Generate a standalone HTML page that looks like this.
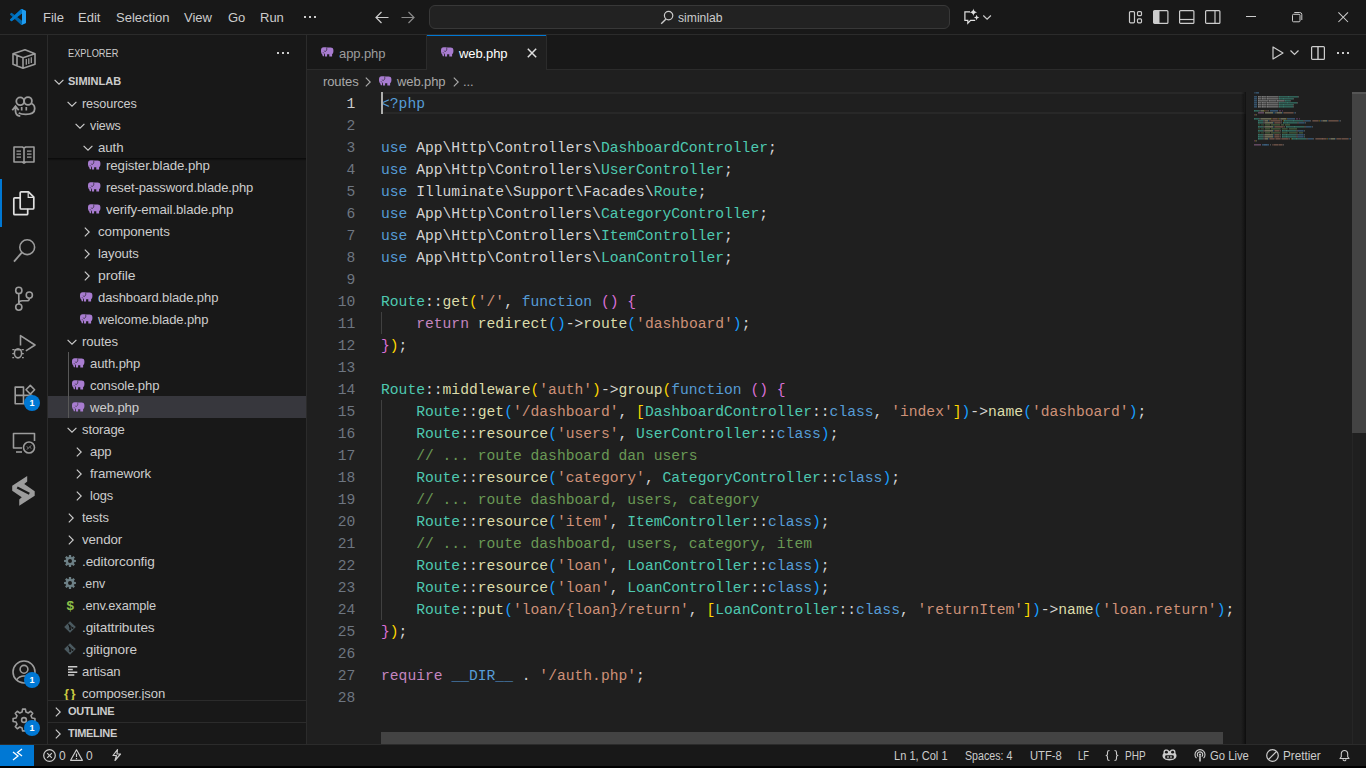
<!DOCTYPE html>
<html><head><meta charset="utf-8"><style>
*{margin:0;padding:0;box-sizing:border-box}
html,body{width:1366px;height:768px;overflow:hidden;background:#000;font-family:"Liberation Sans",sans-serif;font-size:13px;color:#cccccc}
.a{position:absolute}
svg.i{position:absolute;overflow:visible}
.menu{position:absolute;top:9px;color:#cccccc;font-size:13px;line-height:17px;white-space:nowrap}
.row{position:absolute;height:22px;line-height:22px;padding-top:1px;white-space:nowrap;letter-spacing:-0.1px;color:#cccccc;font-size:13px}
.code{position:absolute;left:381px;padding-top:1px;font-family:"Liberation Mono",monospace;font-size:14.66px;line-height:22px;white-space:pre;color:#d4d4d4}
.ln{position:absolute;left:307px;width:48.3px;padding-top:1px;text-align:right;font-family:"Liberation Mono",monospace;font-size:14.66px;line-height:22px;color:#6e7681}
.ln.cur{color:#cccccc}
.k{color:#569cd6}.t{color:#4ec9b0}.f{color:#dcdcaa}.s{color:#ce9178}.c{color:#6a9955}.r{color:#c586c0}
.b1{color:#ffd700}.b2{color:#da70d6}.b3{color:#179fff}
.st{position:absolute;top:746px;transform-origin:0 0;height:21px;line-height:21px;font-size:12px;color:#cccccc;white-space:nowrap}
.badge{position:absolute;width:16px;height:16px;border-radius:8px;background:#0078d4;color:#fff;font-size:9px;font-weight:bold;line-height:16px;text-align:center}
</style></head><body>
<div class="a" style="left:0;top:0;width:1366px;height:34px;background:#181818"></div>
<div class="a" style="left:0;top:34px;width:1366px;height:1px;background:#2b2b2b"></div>
<svg class="i" style="left:10px;top:9px" width="16" height="16" viewBox="0 0 100 100">
<path fill="#0065a9" d="M96.5 10.8 75.9.9a6.2 6.2 0 0 0-7.1 1.2L29.4 38.1 12.2 25.1a4.2 4.2 0 0 0-5.3.2L1.4 30.3a4.2 4.2 0 0 0 0 6.2L16.3 50 1.4 63.6a4.2 4.2 0 0 0 0 6.2l5.5 5a4.2 4.2 0 0 0 5.3.2l17.2-13L68.8 98a6.2 6.2 0 0 0 7.1 1.2l20.6-9.9a6.2 6.2 0 0 0 3.5-5.6V16.4a6.2 6.2 0 0 0-3.5-5.6zM75 72.7 45.1 50 75 27.3z"/>
<path fill="#007acc" d="M96.5 10.8 75.9.9a6.2 6.2 0 0 0-7.1 1.2L1.4 63.6a4.2 4.2 0 0 0 0 6.2l5.5 5a4.2 4.2 0 0 0 5.3.2L93.5 13.4C97 10.7 100 13.2 100 16.4v-.2a6.2 6.2 0 0 0-3.5-5.4z" opacity=".9"/>
<path fill="#1f9cf0" d="M75.9 99.1a6.2 6.2 0 0 1-7.1-1.2c2.3 2.3 6.2.7 6.2-2.6V4.7c0-3.3-3.9-4.9-6.2-2.6a6.2 6.2 0 0 1 7.1-1.2l20.6 9.9a6.2 6.2 0 0 1 3.5 5.6v67.2a6.2 6.2 0 0 1-3.5 5.6z"/>
</svg>
<div class="menu" style="left:43px">File</div>
<div class="menu" style="left:78px">Edit</div>
<div class="menu" style="left:116px">Selection</div>
<div class="menu" style="left:184px">View</div>
<div class="menu" style="left:228px">Go</div>
<div class="menu" style="left:260px">Run</div>
<div class="a" style="left:304px;top:16px;width:2px;height:2px;background:#cccccc"></div>
<div class="a" style="left:309px;top:16px;width:2px;height:2px;background:#cccccc"></div>
<div class="a" style="left:314px;top:16px;width:2px;height:2px;background:#cccccc"></div>
<svg class="i" style="left:375px;top:11px" width="14" height="13" viewBox="0 0 14 13"><path d="M6.5 1 1 6.5 6.5 12M1 6.5h12.5" fill="none" stroke="#cccccc" stroke-width="1.2"/></svg>
<svg class="i" style="left:401px;top:11px" width="14" height="13" viewBox="0 0 14 13"><path d="M7.5 1 13 6.5 7.5 12M13 6.5H.5" fill="none" stroke="#8b8b8b" stroke-width="1.2"/></svg>
<div class="a" style="left:429px;top:5px;width:521px;height:24px;background:#222222;border:1px solid #383838;border-radius:6px"></div>
<svg class="i" style="left:660px;top:10px" width="15" height="15" viewBox="0 0 15 15"><circle cx="8.6" cy="5.6" r="4.2" fill="none" stroke="#cccccc" stroke-width="1.2"/><path d="M5.8 9.2 1.2 13.8" stroke="#cccccc" stroke-width="1.4"/></svg>
<div class="menu" style="left:678px;top:9px;transform:scaleX(0.935);transform-origin:0 0">siminlab</div>
<svg class="i" style="left:960px;top:5px" width="36" height="24" viewBox="0 0 36 24">
<path d="M10 6.9H4.9v8.4h2.9v2.9l2.8-2.9h4.6" fill="none" stroke="#e0e0e0" stroke-width="1.2"/>
<path d="M13.4 3.6Q13.8 6.9 17.1 7.3 13.8 7.7 13.4 11 13 7.7 9.7 7.3 13 6.9 13.4 3.6Z" fill="#e0e0e0"/>
<path d="M16.6 9.8Q16.9 12.2 19.3 12.5 16.9 12.8 16.6 15.2 16.3 12.8 13.9 12.5 16.3 12.2 16.6 9.8Z" fill="#e0e0e0"/>
<path d="M23.3 10.5l3.8 3.6 3.8-3.6" fill="none" stroke="#cccccc" stroke-width="1.2"/>
</svg>
<svg class="i" style="left:1128px;top:10px" width="15" height="14" viewBox="0 0 15 14">
<rect x="1.5" y="1.6" width="5" height="11.2" rx="1" fill="none" stroke="#cccccc" stroke-width="1.2"/>
<rect x="9.5" y="1.6" width="4" height="4" rx="1" fill="none" stroke="#cccccc" stroke-width="1.2"/>
<rect x="9.5" y="8.8" width="4" height="4" rx="1" fill="none" stroke="#cccccc" stroke-width="1.2"/></svg>
<svg class="i" style="left:1153px;top:10px" width="16" height="14" viewBox="0 0 16 14">
<rect x=".6" y=".6" width="14.3" height="12.8" rx="1" fill="none" stroke="#cccccc" stroke-width="1.2"/>
<rect x="1" y="1" width="5.5" height="12" fill="#cccccc"/></svg>
<svg class="i" style="left:1179px;top:10px" width="16" height="14" viewBox="0 0 16 14">
<rect x=".6" y=".6" width="14.3" height="12.8" rx="1" fill="none" stroke="#cccccc" stroke-width="1.2"/>
<path d="M1 9.5h14" stroke="#cccccc" stroke-width="1.2"/></svg>
<svg class="i" style="left:1205px;top:10px" width="16" height="14" viewBox="0 0 16 14">
<rect x=".6" y=".6" width="14.3" height="12.8" rx="1" fill="none" stroke="#cccccc" stroke-width="1.2"/>
<path d="M10 1v12" stroke="#cccccc" stroke-width="1.2"/></svg>
<div class="a" style="left:1246px;top:16px;width:10px;height:1px;background:#cccccc"></div>
<svg class="i" style="left:1292px;top:12px" width="11" height="11" viewBox="0 0 11 11">
<rect x=".5" y="2.3" width="7.5" height="7.5" rx="1" fill="none" stroke="#cccccc"/>
<path d="M2.3 .5h5.5a2 2 0 0 1 2 2v5.5" fill="none" stroke="#cccccc"/></svg>
<svg class="i" style="left:1338px;top:12px" width="11" height="11" viewBox="0 0 11 11"><path d="M.4.4l9.6 9.6M10 .4l-9.6 9.6" stroke="#cccccc" stroke-width="1.05"/></svg>
<div class="a" style="left:0;top:35px;width:47px;height:709px;background:#181818"></div>
<div class="a" style="left:47px;top:35px;width:1px;height:709px;background:#2b2b2b"></div>
<div class="a" style="left:0;top:179px;width:2px;height:48px;background:#0078d4"></div>
<svg class="i" style="left:12px;top:49px" width="24" height="20" viewBox="0 0 24 20">
<path d="M1 4.8 13 .8l10 4v10.4L11 19.2 1 15.2z M1 4.8l10 4 12-4 M11 8.8v10.4 M5 6.4v10.4" fill="none" stroke="#9c9c9c" stroke-width="1.6" stroke-linejoin="round"/>
<path d="M14.3 10v5.8M16.8 9.2V15M19.3 8.3v5.8" stroke="#9c9c9c" stroke-width="1.3"/></svg>
<svg class="i" style="left:8px;top:90px" width="32" height="32" viewBox="0 0 32 32">
<circle cx="12.2" cy="11.3" r="3.9" fill="none" stroke="#9c9c9c" stroke-width="1.8"/>
<circle cx="20" cy="11" r="3.9" fill="none" stroke="#9c9c9c" stroke-width="1.8"/>
<path d="M23.5 13.5c2 .8 3.2 2.8 3.2 5.2 0 3.6-3.5 5.6-9 5.6-3.5 0-5.5-.5-7-1.3" fill="none" stroke="#9c9c9c" stroke-width="1.8"/>
<path d="M13.7 17v3.6M18.3 17v3.6" stroke="#9c9c9c" stroke-width="1.7"/>
<path d="M4.3 20.2 7.5 16.2l3.2 4 M7.5 16.5v4.5c0 2.8 2 4.8 4.8 5.2" fill="none" stroke="#9c9c9c" stroke-width="1.8"/></svg>
<svg class="i" style="left:13px;top:146px" width="22" height="18" viewBox="0 0 22 18">
<path d="M1 1h8.3l1.7 1 1.7-1H21v15h-8.3L11 17.2 9.3 16H1z M11 2v15" fill="none" stroke="#9c9c9c" stroke-width="1.6" stroke-linejoin="round"/>
<path d="M3.5 5.2h4.5M3.5 8.2h4.5M3.5 11.2h4.5M14 5.2h4.5M14 8.2h4.5M14 11.2h4.5" stroke="#9c9c9c" stroke-width="1.3"/></svg>
<svg class="i" style="left:13px;top:191px" width="22" height="25" viewBox="0 0 22 25">
<path d="M7 6.8H1.8a1 1 0 0 0-1 1v14.9a1 1 0 0 0 1 1h11.9a1 1 0 0 0 1-1v-5" fill="none" stroke="#e0e0e0" stroke-width="1.7" stroke-linejoin="round"/>
<path d="M7.2 1.8a1 1 0 0 1 1-1h7.3l5.3 5.3v10.9a1 1 0 0 1-1 1H8.2a1 1 0 0 1-1-1z" fill="none" stroke="#e0e0e0" stroke-width="1.7" stroke-linejoin="round"/>
<path d="M15.2 1.2V6.4h5.2" fill="none" stroke="#e0e0e0" stroke-width="1.2"/></svg>
<svg class="i" style="left:12px;top:238px" width="24" height="24" viewBox="0 0 24 24">
<circle cx="15.2" cy="9.2" r="7.4" fill="none" stroke="#9c9c9c" stroke-width="1.6"/>
<path d="M9.8 14.6 2 23.6" stroke="#9c9c9c" stroke-width="1.8"/></svg>
<svg class="i" style="left:14px;top:286px" width="20" height="24" viewBox="0 0 20 24">
<circle cx="4.8" cy="4.4" r="3.1" fill="none" stroke="#9c9c9c" stroke-width="1.6"/>
<circle cx="4.8" cy="21.1" r="3.1" fill="none" stroke="#9c9c9c" stroke-width="1.6"/>
<circle cx="15.3" cy="9.1" r="3.1" fill="none" stroke="#9c9c9c" stroke-width="1.6"/>
<path d="M4.8 7.5v10.5 M15.3 12.2v.6c0 1.3-.8 2-2.3 2H8.2c-2.2 0-3.4 1.2-3.4 2.8" fill="none" stroke="#9c9c9c" stroke-width="1.6"/></svg>
<svg class="i" style="left:8px;top:330px" width="32" height="32" viewBox="0 0 32 32">
<path d="M12.5 15.4V5.6L27 15 17.9 20.9" fill="none" stroke="#9c9c9c" stroke-width="1.6" stroke-linejoin="round"/>
<ellipse cx="10" cy="23.3" rx="3.6" ry="4.6" fill="none" stroke="#9c9c9c" stroke-width="1.6"/>
<path d="M6.5 19.8h7 M4.3 19.6h1.8M14 19.6h1.8M4.3 23.6h1.8M14 23.6h1.8M4.3 27.6h1.8M14 27.6h1.8" fill="none" stroke="#9c9c9c" stroke-width="1.4"/></svg>
<svg class="i" style="left:13px;top:383px" width="24" height="24" viewBox="0 0 24 24">
<path d="M2.2 4.1H10.5V12.4H2.2Z M2.2 12.4H10.5V20.8H2.2Z M10.5 12.4H18.8V20.8H10.5Z" fill="none" stroke="#9c9c9c" stroke-width="1.6" stroke-linejoin="round"/>
<path d="M17.3 2.4 21.6 6.75 17.3 11.1 13 6.75Z" fill="none" stroke="#9c9c9c" stroke-width="1.6" stroke-linejoin="round"/></svg>
<div class="badge" style="left:24px;top:395px">1</div>
<svg class="i" style="left:12px;top:432px" width="24" height="22" viewBox="0 0 24 22">
<path d="M10 16H1.5V1.5h21V9" fill="none" stroke="#9c9c9c" stroke-width="1.6" stroke-linejoin="round"/>
<path d="M4 20h6" stroke="#9c9c9c" stroke-width="1.6"/>
<circle cx="17" cy="15.5" r="5.5" fill="none" stroke="#9c9c9c" stroke-width="1.6"/>
<path d="M15 14.5l1.5 1.5-1.5 1.5M19 13.5l-1.5 1.5 1.5 1.5" fill="none" stroke="#9c9c9c" stroke-width="1"/></svg>
<svg class="i" style="left:8px;top:474px" width="32" height="32" viewBox="0 0 32 32">
<path d="M19.2 2V7.5L16.25 10 26.7 17.3V21.7L11.25 31.7V25.6L13.75 23.3 4.2 16.7V11.7z" fill="#9c9c9c"/>
<path d="M9.2 13.6 21.3 19.7" stroke="#181818" stroke-width="2.2"/></svg>
<svg class="i" style="left:12px;top:660px" width="24" height="24" viewBox="0 0 24 24">
<circle cx="12" cy="12" r="11" fill="none" stroke="#9c9c9c" stroke-width="1.6"/>
<circle cx="12" cy="9.3" r="3.9" fill="none" stroke="#9c9c9c" stroke-width="1.6"/>
<path d="M4.5 20a9 9 0 0 1 15 0" fill="none" stroke="#9c9c9c" stroke-width="1.6"/></svg>
<div class="badge" style="left:24px;top:672px">1</div>
<svg class="i" style="left:12px;top:708px" width="24" height="24" viewBox="0 0 24 24">
<path d="M19.96 10.05 L22.91 10.57 L22.91 13.43 L19.96 13.95 L19.01 16.25 L20.72 18.70 L18.70 20.72 L16.25 19.01 L13.95 19.96 L13.43 22.91 L10.57 22.91 L10.05 19.96 L7.75 19.01 L5.30 20.72 L3.28 18.70 L4.99 16.25 L4.04 13.95 L1.09 13.43 L1.09 10.57 L4.04 10.05 L4.99 7.75 L3.28 5.30 L5.30 3.28 L7.75 4.99 L10.05 4.04 L10.57 1.09 L13.43 1.09 L13.95 4.04 L16.25 4.99 L18.70 3.28 L20.72 5.30 L19.01 7.75Z" fill="none" stroke="#9c9c9c" stroke-width="1.6" stroke-linejoin="round"/>
<circle cx="12" cy="12" r="2.4" fill="none" stroke="#9c9c9c" stroke-width="1.6"/></svg>
<div class="badge" style="left:24px;top:720px">1</div>
<div class="a" style="left:48px;top:35px;width:258px;height:709px;background:#181818"></div>
<div class="a" style="left:306px;top:35px;width:1px;height:709px;background:#2b2b2b"></div>
<div class="a" style="left:68px;top:46px;font-size:11px;line-height:14px;color:#cccccc;transform:scaleX(0.84);transform-origin:0 0">EXPLORER</div>
<div class="a" style="left:277px;top:52px;width:2px;height:2px;background:#cccccc"></div>
<div class="a" style="left:282px;top:52px;width:2px;height:2px;background:#cccccc"></div>
<div class="a" style="left:287px;top:52px;width:2px;height:2px;background:#cccccc"></div>
<div class="a" style="left:48px;top:396px;width:258px;height:22px;background:#37373d"></div>
<div class="a" style="left:68px;top:352px;width:1px;height:66px;background:#585858"></div>
<svg class="i" style="left:88px;top:160px" width="13" height="10" viewBox="0 0 13 10"><path d="M2.6.3C1 .3 0 1.5 0 3.4v1C0 5.5.7 6.6 1.3 7.5L1.8 9.2H3V7L3.9 7.3V9.4H6.1V7.2H8.3V9.4H11.1V7.3C11.9 6.7 12.4 5.6 12.4 4.2V3.1C12.4 1.4 11.2.6 9.6.6H6.4C5.4.4 4.2.3 2.6.3Z" fill="#a87cd0"/><path d="M5.5.7C6 1.9 5.9 3.5 4.7 4.2 4 4.6 3.4 4.3 3.2 3.8" fill="none" stroke="#181818" stroke-width=".9" opacity=".75"/><path d="M2 5.3 3.3 6.6" stroke="#181818" stroke-width=".9" opacity=".7"/></svg>
<div class="row" style="left:106px;top:154px;transform:scaleX(1.0216);transform-origin:0 0">register.blade.php</div>
<svg class="i" style="left:88px;top:182px" width="13" height="10" viewBox="0 0 13 10"><path d="M2.6.3C1 .3 0 1.5 0 3.4v1C0 5.5.7 6.6 1.3 7.5L1.8 9.2H3V7L3.9 7.3V9.4H6.1V7.2H8.3V9.4H11.1V7.3C11.9 6.7 12.4 5.6 12.4 4.2V3.1C12.4 1.4 11.2.6 9.6.6H6.4C5.4.4 4.2.3 2.6.3Z" fill="#a87cd0"/><path d="M5.5.7C6 1.9 5.9 3.5 4.7 4.2 4 4.6 3.4 4.3 3.2 3.8" fill="none" stroke="#181818" stroke-width=".9" opacity=".75"/><path d="M2 5.3 3.3 6.6" stroke="#181818" stroke-width=".9" opacity=".7"/></svg>
<div class="row" style="left:106px;top:176px">reset-password.blade.php</div>
<svg class="i" style="left:88px;top:204px" width="13" height="10" viewBox="0 0 13 10"><path d="M2.6.3C1 .3 0 1.5 0 3.4v1C0 5.5.7 6.6 1.3 7.5L1.8 9.2H3V7L3.9 7.3V9.4H6.1V7.2H8.3V9.4H11.1V7.3C11.9 6.7 12.4 5.6 12.4 4.2V3.1C12.4 1.4 11.2.6 9.6.6H6.4C5.4.4 4.2.3 2.6.3Z" fill="#a87cd0"/><path d="M5.5.7C6 1.9 5.9 3.5 4.7 4.2 4 4.6 3.4 4.3 3.2 3.8" fill="none" stroke="#181818" stroke-width=".9" opacity=".75"/><path d="M2 5.3 3.3 6.6" stroke="#181818" stroke-width=".9" opacity=".7"/></svg>
<div class="row" style="left:106px;top:198px;transform:scaleX(1.0184);transform-origin:0 0">verify-email.blade.php</div>
<svg class="i" style="left:84px;top:226.5px" width="6" height="10" viewBox="0 0 6 10"><path d="M.8.6 5.2 5 .8 9.4" fill="none" stroke="#cccccc" stroke-width="1.15"/></svg>
<div class="row" style="left:98px;top:220px;transform:scaleX(1.0272);transform-origin:0 0">components</div>
<svg class="i" style="left:84px;top:248.5px" width="6" height="10" viewBox="0 0 6 10"><path d="M.8.6 5.2 5 .8 9.4" fill="none" stroke="#cccccc" stroke-width="1.15"/></svg>
<div class="row" style="left:98px;top:242px;transform:scaleX(1.0073);transform-origin:0 0">layouts</div>
<svg class="i" style="left:84px;top:270.5px" width="6" height="10" viewBox="0 0 6 10"><path d="M.8.6 5.2 5 .8 9.4" fill="none" stroke="#cccccc" stroke-width="1.15"/></svg>
<div class="row" style="left:98px;top:264px;transform:scaleX(1.0744);transform-origin:0 0">profile</div>
<svg class="i" style="left:80px;top:292px" width="13" height="10" viewBox="0 0 13 10"><path d="M2.6.3C1 .3 0 1.5 0 3.4v1C0 5.5.7 6.6 1.3 7.5L1.8 9.2H3V7L3.9 7.3V9.4H6.1V7.2H8.3V9.4H11.1V7.3C11.9 6.7 12.4 5.6 12.4 4.2V3.1C12.4 1.4 11.2.6 9.6.6H6.4C5.4.4 4.2.3 2.6.3Z" fill="#a87cd0"/><path d="M5.5.7C6 1.9 5.9 3.5 4.7 4.2 4 4.6 3.4 4.3 3.2 3.8" fill="none" stroke="#181818" stroke-width=".9" opacity=".75"/><path d="M2 5.3 3.3 6.6" stroke="#181818" stroke-width=".9" opacity=".7"/></svg>
<div class="row" style="left:98px;top:286px">dashboard.blade.php</div>
<svg class="i" style="left:80px;top:314px" width="13" height="10" viewBox="0 0 13 10"><path d="M2.6.3C1 .3 0 1.5 0 3.4v1C0 5.5.7 6.6 1.3 7.5L1.8 9.2H3V7L3.9 7.3V9.4H6.1V7.2H8.3V9.4H11.1V7.3C11.9 6.7 12.4 5.6 12.4 4.2V3.1C12.4 1.4 11.2.6 9.6.6H6.4C5.4.4 4.2.3 2.6.3Z" fill="#a87cd0"/><path d="M5.5.7C6 1.9 5.9 3.5 4.7 4.2 4 4.6 3.4 4.3 3.2 3.8" fill="none" stroke="#181818" stroke-width=".9" opacity=".75"/><path d="M2 5.3 3.3 6.6" stroke="#181818" stroke-width=".9" opacity=".7"/></svg>
<div class="row" style="left:98px;top:308px">welcome.blade.php</div>
<svg class="i" style="left:66.5px;top:338.5px" width="10" height="6" viewBox="0 0 10 6"><path d="M.6.8 5 5.2 9.4.8" fill="none" stroke="#cccccc" stroke-width="1.15"/></svg>
<div class="row" style="left:82px;top:330px;transform:scaleX(1.0115);transform-origin:0 0">routes</div>
<svg class="i" style="left:72px;top:358px" width="13" height="10" viewBox="0 0 13 10"><path d="M2.6.3C1 .3 0 1.5 0 3.4v1C0 5.5.7 6.6 1.3 7.5L1.8 9.2H3V7L3.9 7.3V9.4H6.1V7.2H8.3V9.4H11.1V7.3C11.9 6.7 12.4 5.6 12.4 4.2V3.1C12.4 1.4 11.2.6 9.6.6H6.4C5.4.4 4.2.3 2.6.3Z" fill="#a87cd0"/><path d="M5.5.7C6 1.9 5.9 3.5 4.7 4.2 4 4.6 3.4 4.3 3.2 3.8" fill="none" stroke="#181818" stroke-width=".9" opacity=".75"/><path d="M2 5.3 3.3 6.6" stroke="#181818" stroke-width=".9" opacity=".7"/></svg>
<div class="row" style="left:90px;top:352px;transform:scaleX(1.0080);transform-origin:0 0">auth.php</div>
<svg class="i" style="left:72px;top:380px" width="13" height="10" viewBox="0 0 13 10"><path d="M2.6.3C1 .3 0 1.5 0 3.4v1C0 5.5.7 6.6 1.3 7.5L1.8 9.2H3V7L3.9 7.3V9.4H6.1V7.2H8.3V9.4H11.1V7.3C11.9 6.7 12.4 5.6 12.4 4.2V3.1C12.4 1.4 11.2.6 9.6.6H6.4C5.4.4 4.2.3 2.6.3Z" fill="#a87cd0"/><path d="M5.5.7C6 1.9 5.9 3.5 4.7 4.2 4 4.6 3.4 4.3 3.2 3.8" fill="none" stroke="#181818" stroke-width=".9" opacity=".75"/><path d="M2 5.3 3.3 6.6" stroke="#181818" stroke-width=".9" opacity=".7"/></svg>
<div class="row" style="left:90px;top:374px;transform:scaleX(1.0044);transform-origin:0 0">console.php</div>
<svg class="i" style="left:72px;top:402px" width="13" height="10" viewBox="0 0 13 10"><path d="M2.6.3C1 .3 0 1.5 0 3.4v1C0 5.5.7 6.6 1.3 7.5L1.8 9.2H3V7L3.9 7.3V9.4H6.1V7.2H8.3V9.4H11.1V7.3C11.9 6.7 12.4 5.6 12.4 4.2V3.1C12.4 1.4 11.2.6 9.6.6H6.4C5.4.4 4.2.3 2.6.3Z" fill="#a87cd0"/><path d="M5.5.7C6 1.9 5.9 3.5 4.7 4.2 4 4.6 3.4 4.3 3.2 3.8" fill="none" stroke="#37373d" stroke-width=".9" opacity=".75"/><path d="M2 5.3 3.3 6.6" stroke="#37373d" stroke-width=".9" opacity=".7"/></svg>
<div class="row" style="left:90px;top:396px;transform:scaleX(1.0127);transform-origin:0 0">web.php</div>
<svg class="i" style="left:66.5px;top:426.5px" width="10" height="6" viewBox="0 0 10 6"><path d="M.6.8 5 5.2 9.4.8" fill="none" stroke="#cccccc" stroke-width="1.15"/></svg>
<div class="row" style="left:82px;top:418px;transform:scaleX(1.0025);transform-origin:0 0">storage</div>
<svg class="i" style="left:76px;top:446.5px" width="6" height="10" viewBox="0 0 6 10"><path d="M.8.6 5.2 5 .8 9.4" fill="none" stroke="#cccccc" stroke-width="1.15"/></svg>
<div class="row" style="left:90px;top:440px;transform:scaleX(1.0053);transform-origin:0 0">app</div>
<svg class="i" style="left:76px;top:468.5px" width="6" height="10" viewBox="0 0 6 10"><path d="M.8.6 5.2 5 .8 9.4" fill="none" stroke="#cccccc" stroke-width="1.15"/></svg>
<div class="row" style="left:90px;top:462px;transform:scaleX(1.0217);transform-origin:0 0">framework</div>
<svg class="i" style="left:76px;top:490.5px" width="6" height="10" viewBox="0 0 6 10"><path d="M.8.6 5.2 5 .8 9.4" fill="none" stroke="#cccccc" stroke-width="1.15"/></svg>
<div class="row" style="left:90px;top:484px;transform:scaleX(0.9876);transform-origin:0 0">logs</div>
<svg class="i" style="left:68px;top:512.5px" width="6" height="10" viewBox="0 0 6 10"><path d="M.8.6 5.2 5 .8 9.4" fill="none" stroke="#cccccc" stroke-width="1.15"/></svg>
<div class="row" style="left:82px;top:506px;transform:scaleX(0.9930);transform-origin:0 0">tests</div>
<svg class="i" style="left:68px;top:534.5px" width="6" height="10" viewBox="0 0 6 10"><path d="M.8.6 5.2 5 .8 9.4" fill="none" stroke="#cccccc" stroke-width="1.15"/></svg>
<div class="row" style="left:82px;top:528px;transform:scaleX(1.0250);transform-origin:0 0">vendor</div>
<svg class="i" style="left:64px;top:555px" width="12" height="12" viewBox="0 0 12 12"><path d="M10.11 4.73 L11.90 4.93 L11.90 7.07 L10.11 7.27 L9.80 8.01 L10.93 9.41 L9.41 10.93 L8.01 9.80 L7.27 10.11 L7.07 11.90 L4.93 11.90 L4.73 10.11 L3.99 9.80 L2.59 10.93 L1.07 9.41 L2.20 8.01 L1.89 7.27 L0.10 7.07 L0.10 4.93 L1.89 4.73 L2.20 3.99 L1.07 2.59 L2.59 1.07 L3.99 2.20 L4.73 1.89 L4.93 0.10 L7.07 0.10 L7.27 1.89 L8.01 2.20 L9.41 1.07 L10.93 2.59 L9.80 3.99Z M8 6a2 2 0 1 0-4 0 2 2 0 1 0 4 0Z" fill="#6d8086" fill-rule="evenodd"/></svg>
<div class="row" style="left:82px;top:550px;transform:scaleX(1.0450);transform-origin:0 0">.editorconfig</div>
<svg class="i" style="left:64px;top:577px" width="12" height="12" viewBox="0 0 12 12"><path d="M10.11 4.73 L11.90 4.93 L11.90 7.07 L10.11 7.27 L9.80 8.01 L10.93 9.41 L9.41 10.93 L8.01 9.80 L7.27 10.11 L7.07 11.90 L4.93 11.90 L4.73 10.11 L3.99 9.80 L2.59 10.93 L1.07 9.41 L2.20 8.01 L1.89 7.27 L0.10 7.07 L0.10 4.93 L1.89 4.73 L2.20 3.99 L1.07 2.59 L2.59 1.07 L3.99 2.20 L4.73 1.89 L4.93 0.10 L7.07 0.10 L7.27 1.89 L8.01 2.20 L9.41 1.07 L10.93 2.59 L9.80 3.99Z M8 6a2 2 0 1 0-4 0 2 2 0 1 0 4 0Z" fill="#6d8086" fill-rule="evenodd"/></svg>
<div class="row" style="left:82px;top:572px;transform:scaleX(0.9536);transform-origin:0 0">.env</div>
<div class="a" style="left:66.5px;top:595px;line-height:22px;font-size:13.5px;font-weight:bold;color:#8dc149">$</div>
<div class="row" style="left:82px;top:594px;transform:scaleX(0.9852);transform-origin:0 0">.env.example</div>
<svg class="i" style="left:64px;top:621px" width="12" height="12" viewBox="0 0 12 12"><path d="M6 .2 11.8 6 6 11.8 .2 6z" fill="#4b5a60"/><path d="M4 2.5 6.2 4.7v3.6M6.2 4.7 8.5 7" stroke="#181818" stroke-width="1"/><circle cx="6.2" cy="8.3" r="1" fill="#181818"/><circle cx="8.5" cy="7" r="1" fill="#181818"/></svg>
<div class="row" style="left:82px;top:616px;transform:scaleX(1.0450);transform-origin:0 0">.gitattributes</div>
<svg class="i" style="left:64px;top:643px" width="12" height="12" viewBox="0 0 12 12"><path d="M6 .2 11.8 6 6 11.8 .2 6z" fill="#4b5a60"/><path d="M4 2.5 6.2 4.7v3.6M6.2 4.7 8.5 7" stroke="#181818" stroke-width="1"/><circle cx="6.2" cy="8.3" r="1" fill="#181818"/><circle cx="8.5" cy="7" r="1" fill="#181818"/></svg>
<div class="row" style="left:82px;top:638px;transform:scaleX(1.0463);transform-origin:0 0">.gitignore</div>
<svg class="i" style="left:67.7px;top:665px" width="11" height="11" viewBox="0 0 11 11"><path d="M0 1.8h9.3M0 4.5h4.8M0 7.2h9.3M0 9.9h6.3" stroke="#cccccc" stroke-width="1.5"/></svg>
<div class="row" style="left:82px;top:660px;transform:scaleX(1.0055);transform-origin:0 0">artisan</div>
<div class="a" style="left:64px;top:683px;line-height:22px;font-size:13px;color:#cbcb41;font-weight:bold;letter-spacing:1.5px">{}</div>
<div class="row" style="left:82px;top:682px;transform:scaleX(1.0072);transform-origin:0 0">composer.json</div>
<div class="a" style="left:48px;top:70px;width:258px;height:88px;background:#181818"></div>
<div class="a" style="left:48px;top:158px;width:258px;height:3px;background:linear-gradient(rgba(0,0,0,.6),rgba(0,0,0,0))"></div>
<svg class="i" style="left:53.5px;top:78.5px" width="10" height="6" viewBox="0 0 10 6"><path d="M.6.8 5 5.2 9.4.8" fill="none" stroke="#cccccc" stroke-width="1.15"/></svg>
<div class="row" style="left:68px;top:69px;font-size:11px;font-weight:bold;letter-spacing:0px">SIMINLAB</div>
<svg class="i" style="left:66.5px;top:100.5px" width="10" height="6" viewBox="0 0 10 6"><path d="M.6.8 5 5.2 9.4.8" fill="none" stroke="#cccccc" stroke-width="1.15"/></svg>
<div class="row" style="left:82px;top:92px;transform:scaleX(0.9733);transform-origin:0 0">resources</div>
<svg class="i" style="left:74.5px;top:122.5px" width="10" height="6" viewBox="0 0 10 6"><path d="M.6.8 5 5.2 9.4.8" fill="none" stroke="#cccccc" stroke-width="1.15"/></svg>
<div class="row" style="left:90px;top:114px;transform:scaleX(0.9594);transform-origin:0 0">views</div>
<svg class="i" style="left:82.5px;top:144.5px" width="10" height="6" viewBox="0 0 10 6"><path d="M.6.8 5 5.2 9.4.8" fill="none" stroke="#cccccc" stroke-width="1.15"/></svg>
<div class="row" style="left:98px;top:136px;transform:scaleX(1.0204);transform-origin:0 0">auth</div>
<div class="a" style="left:48px;top:700px;width:258px;height:44px;background:#181818"></div>
<div class="a" style="left:48px;top:700px;width:258px;height:1px;background:#2b2b2b"></div>
<div class="a" style="left:48px;top:722px;width:258px;height:1px;background:#2b2b2b"></div>
<svg class="i" style="left:55px;top:706.5px" width="6" height="10" viewBox="0 0 6 10"><path d="M.8.6 5.2 5 .8 9.4" fill="none" stroke="#cccccc" stroke-width="1.15"/></svg>
<div class="row" style="left:68px;top:699px;font-size:11px;font-weight:bold;letter-spacing:-0.3px">OUTLINE</div>
<svg class="i" style="left:55px;top:728.5px" width="6" height="10" viewBox="0 0 6 10"><path d="M.8.6 5.2 5 .8 9.4" fill="none" stroke="#cccccc" stroke-width="1.15"/></svg>
<div class="row" style="left:68px;top:721px;font-size:11px;font-weight:bold;letter-spacing:-0.3px">TIMELINE</div>
<div class="a" style="left:307px;top:35px;width:1059px;height:35px;background:#181818"></div>
<div class="a" style="left:307px;top:69px;width:1059px;height:1px;background:#2b2b2b"></div>
<div class="a" style="left:426px;top:35px;width:1px;height:35px;background:#2b2b2b"></div>
<div class="a" style="left:427px;top:35px;width:119px;height:35px;background:#1f1f1f"></div>
<div class="a" style="left:427px;top:35px;width:119px;height:1px;background:#0078d4"></div>
<div class="a" style="left:546px;top:35px;width:1px;height:35px;background:#2b2b2b"></div>
<svg class="i" style="left:321px;top:47px" width="13" height="10" viewBox="0 0 13 10"><path d="M2.6.3C1 .3 0 1.5 0 3.4v1C0 5.5.7 6.6 1.3 7.5L1.8 9.2H3V7L3.9 7.3V9.4H6.1V7.2H8.3V9.4H11.1V7.3C11.9 6.7 12.4 5.6 12.4 4.2V3.1C12.4 1.4 11.2.6 9.6.6H6.4C5.4.4 4.2.3 2.6.3Z" fill="#a87cd0"/><path d="M5.5.7C6 1.9 5.9 3.5 4.7 4.2 4 4.6 3.4 4.3 3.2 3.8" fill="none" stroke="#181818" stroke-width=".9" opacity=".75"/><path d="M2 5.3 3.3 6.6" stroke="#181818" stroke-width=".9" opacity=".7"/></svg>
<div class="row" style="left:339px;top:42px;color:#9d9d9d">app.php</div>
<svg class="i" style="left:441px;top:47px" width="13" height="10" viewBox="0 0 13 10"><path d="M2.6.3C1 .3 0 1.5 0 3.4v1C0 5.5.7 6.6 1.3 7.5L1.8 9.2H3V7L3.9 7.3V9.4H6.1V7.2H8.3V9.4H11.1V7.3C11.9 6.7 12.4 5.6 12.4 4.2V3.1C12.4 1.4 11.2.6 9.6.6H6.4C5.4.4 4.2.3 2.6.3Z" fill="#a87cd0"/><path d="M5.5.7C6 1.9 5.9 3.5 4.7 4.2 4 4.6 3.4 4.3 3.2 3.8" fill="none" stroke="#1f1f1f" stroke-width=".9" opacity=".75"/><path d="M2 5.3 3.3 6.6" stroke="#1f1f1f" stroke-width=".9" opacity=".7"/></svg>
<div class="row" style="left:459px;top:42px;color:#ffffff">web.php</div>
<svg class="i" style="left:527px;top:48px" width="10" height="10" viewBox="0 0 10 10"><path d="M.8.8l8.4 8.4M9.2.8l-8.4 8.4" stroke="#e0e0e0" stroke-width="1.5"/></svg>
<svg class="i" style="left:1272px;top:46px" width="12" height="14" viewBox="0 0 12 14"><path d="M1 1v12l10-6z" fill="none" stroke="#cccccc" stroke-width="1.2" stroke-linejoin="round"/></svg>
<svg class="i" style="left:1290px;top:50px" width="9" height="6" viewBox="0 0 9 6"><path d="M.5.5 4.5 4.5 8.5.5" fill="none" stroke="#cccccc" stroke-width="1.2"/></svg>
<svg class="i" style="left:1311px;top:46px" width="14" height="14" viewBox="0 0 14 14"><rect x=".6" y=".6" width="12.8" height="12.8" rx="1" fill="none" stroke="#cccccc" stroke-width="1.2"/><path d="M7 1v12" stroke="#cccccc" stroke-width="1.4"/></svg>
<div class="a" style="left:1337px;top:52px;width:2px;height:2px;background:#cccccc"></div>
<div class="a" style="left:1342px;top:52px;width:2px;height:2px;background:#cccccc"></div>
<div class="a" style="left:1347px;top:52px;width:2px;height:2px;background:#cccccc"></div>
<div class="a" style="left:307px;top:70px;width:1059px;height:22px;background:#1f1f1f"></div>
<div class="row" style="left:323px;top:70px;color:#a9a9a9">routes</div>
<svg class="i" style="left:365px;top:76.5px" width="6" height="10" viewBox="0 0 6 10"><path d="M.8.6 5.2 5 .8 9.4" fill="none" stroke="#a9a9a9" stroke-width="1.15"/></svg>
<svg class="i" style="left:379px;top:76px" width="13" height="10" viewBox="0 0 13 10"><path d="M2.6.3C1 .3 0 1.5 0 3.4v1C0 5.5.7 6.6 1.3 7.5L1.8 9.2H3V7L3.9 7.3V9.4H6.1V7.2H8.3V9.4H11.1V7.3C11.9 6.7 12.4 5.6 12.4 4.2V3.1C12.4 1.4 11.2.6 9.6.6H6.4C5.4.4 4.2.3 2.6.3Z" fill="#a87cd0"/><path d="M5.5.7C6 1.9 5.9 3.5 4.7 4.2 4 4.6 3.4 4.3 3.2 3.8" fill="none" stroke="#1f1f1f" stroke-width=".9" opacity=".75"/><path d="M2 5.3 3.3 6.6" stroke="#1f1f1f" stroke-width=".9" opacity=".7"/></svg>
<div class="row" style="left:397px;top:70px;color:#a9a9a9">web.php</div>
<svg class="i" style="left:453px;top:76.5px" width="6" height="10" viewBox="0 0 6 10"><path d="M.8.6 5.2 5 .8 9.4" fill="none" stroke="#a9a9a9" stroke-width="1.15"/></svg>
<div class="row" style="left:463px;top:70px;color:#a9a9a9">...</div>
<div class="a" style="left:307px;top:92px;width:1059px;height:652px;background:#1f1f1f"></div>
<div class="a" style="left:381px;top:92px;width:865px;height:22px;border:2px solid #282828"></div>
<div class="a" style="left:381px;top:312px;width:1px;height:22px;background:#404040"></div>
<div class="a" style="left:381px;top:400px;width:1px;height:220px;background:#404040"></div>
<div class="ln cur" style="top:92px">1</div>
<div class="code" style="top:92px"><span class="k">&lt;?php</span></div>
<div class="ln" style="top:114px">2</div>
<div class="ln" style="top:136px">3</div>
<div class="code" style="top:136px"><span class="k">use</span> App\Http\Controllers\<span class="t">DashboardController</span>;</div>
<div class="ln" style="top:158px">4</div>
<div class="code" style="top:158px"><span class="k">use</span> App\Http\Controllers\<span class="t">UserController</span>;</div>
<div class="ln" style="top:180px">5</div>
<div class="code" style="top:180px"><span class="k">use</span> Illuminate\Support\Facades\<span class="t">Route</span>;</div>
<div class="ln" style="top:202px">6</div>
<div class="code" style="top:202px"><span class="k">use</span> App\Http\Controllers\<span class="t">CategoryController</span>;</div>
<div class="ln" style="top:224px">7</div>
<div class="code" style="top:224px"><span class="k">use</span> App\Http\Controllers\<span class="t">ItemController</span>;</div>
<div class="ln" style="top:246px">8</div>
<div class="code" style="top:246px"><span class="k">use</span> App\Http\Controllers\<span class="t">LoanController</span>;</div>
<div class="ln" style="top:268px">9</div>
<div class="ln" style="top:290px">10</div>
<div class="code" style="top:290px"><span class="t">Route</span>::<span class="f">get</span><span class="b1">(</span><span class="s">'/'</span>, <span class="k">function</span> <span class="b2">()</span> <span class="b2">{</span></div>
<div class="ln" style="top:312px">11</div>
<div class="code" style="top:312px">    <span class="r">return</span> <span class="f">redirect</span><span class="b3">()</span>-&gt;<span class="f">route</span><span class="b3">(</span><span class="s">'dashboard'</span><span class="b3">)</span>;</div>
<div class="ln" style="top:334px">12</div>
<div class="code" style="top:334px"><span class="b2">}</span><span class="b1">)</span>;</div>
<div class="ln" style="top:356px">13</div>
<div class="ln" style="top:378px">14</div>
<div class="code" style="top:378px"><span class="t">Route</span>::<span class="f">middleware</span><span class="b1">(</span><span class="s">'auth'</span><span class="b1">)</span>-&gt;<span class="f">group</span><span class="b1">(</span><span class="k">function</span> <span class="b2">()</span> <span class="b2">{</span></div>
<div class="ln" style="top:400px">15</div>
<div class="code" style="top:400px">    <span class="t">Route</span>::<span class="f">get</span><span class="b3">(</span><span class="s">'/dashboard'</span>, <span class="b1">[</span><span class="t">DashboardController</span>::<span class="k">class</span>, <span class="s">'index'</span><span class="b1">]</span><span class="b3">)</span>-&gt;<span class="f">name</span><span class="b3">(</span><span class="s">'dashboard'</span><span class="b3">)</span>;</div>
<div class="ln" style="top:422px">16</div>
<div class="code" style="top:422px">    <span class="t">Route</span>::<span class="f">resource</span><span class="b3">(</span><span class="s">'users'</span>, <span class="t">UserController</span>::<span class="k">class</span><span class="b3">)</span>;</div>
<div class="ln" style="top:444px">17</div>
<div class="code" style="top:444px">    <span class="c">// ... route dashboard dan users</span></div>
<div class="ln" style="top:466px">18</div>
<div class="code" style="top:466px">    <span class="t">Route</span>::<span class="f">resource</span><span class="b3">(</span><span class="s">'category'</span>, <span class="t">CategoryController</span>::<span class="k">class</span><span class="b3">)</span>;</div>
<div class="ln" style="top:488px">19</div>
<div class="code" style="top:488px">    <span class="c">// ... route dashboard, users, category</span></div>
<div class="ln" style="top:510px">20</div>
<div class="code" style="top:510px">    <span class="t">Route</span>::<span class="f">resource</span><span class="b3">(</span><span class="s">'item'</span>, <span class="t">ItemController</span>::<span class="k">class</span><span class="b3">)</span>;</div>
<div class="ln" style="top:532px">21</div>
<div class="code" style="top:532px">    <span class="c">// ... route dashboard, users, category, item</span></div>
<div class="ln" style="top:554px">22</div>
<div class="code" style="top:554px">    <span class="t">Route</span>::<span class="f">resource</span><span class="b3">(</span><span class="s">'loan'</span>, <span class="t">LoanController</span>::<span class="k">class</span><span class="b3">)</span>;</div>
<div class="ln" style="top:576px">23</div>
<div class="code" style="top:576px">    <span class="t">Route</span>::<span class="f">resource</span><span class="b3">(</span><span class="s">'loan'</span>, <span class="t">LoanController</span>::<span class="k">class</span><span class="b3">)</span>;</div>
<div class="ln" style="top:598px">24</div>
<div class="code" style="top:598px">    <span class="t">Route</span>::<span class="f">put</span><span class="b3">(</span><span class="s">'loan/{loan}/return'</span>, <span class="b1">[</span><span class="t">LoanController</span>::<span class="k">class</span>, <span class="s">'returnItem'</span><span class="b1">]</span><span class="b3">)</span>-&gt;<span class="f">name</span><span class="b3">(</span><span class="s">'loan.return'</span><span class="b3">)</span>;</div>
<div class="ln" style="top:620px">25</div>
<div class="code" style="top:620px"><span class="b2">}</span><span class="b1">)</span>;</div>
<div class="ln" style="top:642px">26</div>
<div class="ln" style="top:664px">27</div>
<div class="code" style="top:664px"><span class="r">require</span> <span class="k">__DIR__</span> . <span class="s">'/auth.php'</span>;</div>
<div class="ln" style="top:686px">28</div>
<div class="a" style="left:381px;top:92px;width:2px;height:22px;background:#aeafad"></div>
<div class="a" style="left:1241px;top:92px;width:5px;height:652px;background:linear-gradient(90deg,rgba(0,0,0,0),rgba(0,0,0,.3) 60%,rgba(0,0,0,.6))"></div>
<svg class="i" style="left:1254px;top:92px;" width="100" height="60" viewBox="0 0 100 60"><rect x="0" y="0" width="2" height="1.6" fill="#569cd6" fill-opacity="0.25"/><rect x="2" y="0" width="3" height="1.6" fill="#569cd6" fill-opacity="0.4"/><rect x="0" y="4" width="3" height="1.6" fill="#569cd6" fill-opacity="0.4"/><rect x="4" y="4" width="1" height="1.6" fill="#d4d4d4" fill-opacity="0.5"/><rect x="5" y="4" width="2" height="1.6" fill="#d4d4d4" fill-opacity="0.4"/><rect x="7" y="4" width="1" height="1.6" fill="#d4d4d4" fill-opacity="0.25"/><rect x="8" y="4" width="1" height="1.6" fill="#d4d4d4" fill-opacity="0.5"/><rect x="9" y="4" width="3" height="1.6" fill="#d4d4d4" fill-opacity="0.4"/><rect x="12" y="4" width="1" height="1.6" fill="#d4d4d4" fill-opacity="0.25"/><rect x="13" y="4" width="1" height="1.6" fill="#d4d4d4" fill-opacity="0.5"/><rect x="14" y="4" width="10" height="1.6" fill="#d4d4d4" fill-opacity="0.4"/><rect x="24" y="4" width="1" height="1.6" fill="#d4d4d4" fill-opacity="0.25"/><rect x="25" y="4" width="1" height="1.6" fill="#4ec9b0" fill-opacity="0.5"/><rect x="26" y="4" width="8" height="1.6" fill="#4ec9b0" fill-opacity="0.4"/><rect x="34" y="4" width="1" height="1.6" fill="#4ec9b0" fill-opacity="0.5"/><rect x="35" y="4" width="9" height="1.6" fill="#4ec9b0" fill-opacity="0.4"/><rect x="44" y="4" width="1" height="1.6" fill="#d4d4d4" fill-opacity="0.25"/><rect x="0" y="6" width="3" height="1.6" fill="#569cd6" fill-opacity="0.4"/><rect x="4" y="6" width="1" height="1.6" fill="#d4d4d4" fill-opacity="0.5"/><rect x="5" y="6" width="2" height="1.6" fill="#d4d4d4" fill-opacity="0.4"/><rect x="7" y="6" width="1" height="1.6" fill="#d4d4d4" fill-opacity="0.25"/><rect x="8" y="6" width="1" height="1.6" fill="#d4d4d4" fill-opacity="0.5"/><rect x="9" y="6" width="3" height="1.6" fill="#d4d4d4" fill-opacity="0.4"/><rect x="12" y="6" width="1" height="1.6" fill="#d4d4d4" fill-opacity="0.25"/><rect x="13" y="6" width="1" height="1.6" fill="#d4d4d4" fill-opacity="0.5"/><rect x="14" y="6" width="10" height="1.6" fill="#d4d4d4" fill-opacity="0.4"/><rect x="24" y="6" width="1" height="1.6" fill="#d4d4d4" fill-opacity="0.25"/><rect x="25" y="6" width="1" height="1.6" fill="#4ec9b0" fill-opacity="0.5"/><rect x="26" y="6" width="3" height="1.6" fill="#4ec9b0" fill-opacity="0.4"/><rect x="29" y="6" width="1" height="1.6" fill="#4ec9b0" fill-opacity="0.5"/><rect x="30" y="6" width="9" height="1.6" fill="#4ec9b0" fill-opacity="0.4"/><rect x="39" y="6" width="1" height="1.6" fill="#d4d4d4" fill-opacity="0.25"/><rect x="0" y="8" width="3" height="1.6" fill="#569cd6" fill-opacity="0.4"/><rect x="4" y="8" width="1" height="1.6" fill="#d4d4d4" fill-opacity="0.5"/><rect x="5" y="8" width="9" height="1.6" fill="#d4d4d4" fill-opacity="0.4"/><rect x="14" y="8" width="1" height="1.6" fill="#d4d4d4" fill-opacity="0.25"/><rect x="15" y="8" width="1" height="1.6" fill="#d4d4d4" fill-opacity="0.5"/><rect x="16" y="8" width="6" height="1.6" fill="#d4d4d4" fill-opacity="0.4"/><rect x="22" y="8" width="1" height="1.6" fill="#d4d4d4" fill-opacity="0.25"/><rect x="23" y="8" width="1" height="1.6" fill="#d4d4d4" fill-opacity="0.5"/><rect x="24" y="8" width="6" height="1.6" fill="#d4d4d4" fill-opacity="0.4"/><rect x="30" y="8" width="1" height="1.6" fill="#d4d4d4" fill-opacity="0.25"/><rect x="31" y="8" width="1" height="1.6" fill="#4ec9b0" fill-opacity="0.5"/><rect x="32" y="8" width="4" height="1.6" fill="#4ec9b0" fill-opacity="0.4"/><rect x="36" y="8" width="1" height="1.6" fill="#d4d4d4" fill-opacity="0.25"/><rect x="0" y="10" width="3" height="1.6" fill="#569cd6" fill-opacity="0.4"/><rect x="4" y="10" width="1" height="1.6" fill="#d4d4d4" fill-opacity="0.5"/><rect x="5" y="10" width="2" height="1.6" fill="#d4d4d4" fill-opacity="0.4"/><rect x="7" y="10" width="1" height="1.6" fill="#d4d4d4" fill-opacity="0.25"/><rect x="8" y="10" width="1" height="1.6" fill="#d4d4d4" fill-opacity="0.5"/><rect x="9" y="10" width="3" height="1.6" fill="#d4d4d4" fill-opacity="0.4"/><rect x="12" y="10" width="1" height="1.6" fill="#d4d4d4" fill-opacity="0.25"/><rect x="13" y="10" width="1" height="1.6" fill="#d4d4d4" fill-opacity="0.5"/><rect x="14" y="10" width="10" height="1.6" fill="#d4d4d4" fill-opacity="0.4"/><rect x="24" y="10" width="1" height="1.6" fill="#d4d4d4" fill-opacity="0.25"/><rect x="25" y="10" width="1" height="1.6" fill="#4ec9b0" fill-opacity="0.5"/><rect x="26" y="10" width="7" height="1.6" fill="#4ec9b0" fill-opacity="0.4"/><rect x="33" y="10" width="1" height="1.6" fill="#4ec9b0" fill-opacity="0.5"/><rect x="34" y="10" width="9" height="1.6" fill="#4ec9b0" fill-opacity="0.4"/><rect x="43" y="10" width="1" height="1.6" fill="#d4d4d4" fill-opacity="0.25"/><rect x="0" y="12" width="3" height="1.6" fill="#569cd6" fill-opacity="0.4"/><rect x="4" y="12" width="1" height="1.6" fill="#d4d4d4" fill-opacity="0.5"/><rect x="5" y="12" width="2" height="1.6" fill="#d4d4d4" fill-opacity="0.4"/><rect x="7" y="12" width="1" height="1.6" fill="#d4d4d4" fill-opacity="0.25"/><rect x="8" y="12" width="1" height="1.6" fill="#d4d4d4" fill-opacity="0.5"/><rect x="9" y="12" width="3" height="1.6" fill="#d4d4d4" fill-opacity="0.4"/><rect x="12" y="12" width="1" height="1.6" fill="#d4d4d4" fill-opacity="0.25"/><rect x="13" y="12" width="1" height="1.6" fill="#d4d4d4" fill-opacity="0.5"/><rect x="14" y="12" width="10" height="1.6" fill="#d4d4d4" fill-opacity="0.4"/><rect x="24" y="12" width="1" height="1.6" fill="#d4d4d4" fill-opacity="0.25"/><rect x="25" y="12" width="1" height="1.6" fill="#4ec9b0" fill-opacity="0.5"/><rect x="26" y="12" width="3" height="1.6" fill="#4ec9b0" fill-opacity="0.4"/><rect x="29" y="12" width="1" height="1.6" fill="#4ec9b0" fill-opacity="0.5"/><rect x="30" y="12" width="9" height="1.6" fill="#4ec9b0" fill-opacity="0.4"/><rect x="39" y="12" width="1" height="1.6" fill="#d4d4d4" fill-opacity="0.25"/><rect x="0" y="14" width="3" height="1.6" fill="#569cd6" fill-opacity="0.4"/><rect x="4" y="14" width="1" height="1.6" fill="#d4d4d4" fill-opacity="0.5"/><rect x="5" y="14" width="2" height="1.6" fill="#d4d4d4" fill-opacity="0.4"/><rect x="7" y="14" width="1" height="1.6" fill="#d4d4d4" fill-opacity="0.25"/><rect x="8" y="14" width="1" height="1.6" fill="#d4d4d4" fill-opacity="0.5"/><rect x="9" y="14" width="3" height="1.6" fill="#d4d4d4" fill-opacity="0.4"/><rect x="12" y="14" width="1" height="1.6" fill="#d4d4d4" fill-opacity="0.25"/><rect x="13" y="14" width="1" height="1.6" fill="#d4d4d4" fill-opacity="0.5"/><rect x="14" y="14" width="10" height="1.6" fill="#d4d4d4" fill-opacity="0.4"/><rect x="24" y="14" width="1" height="1.6" fill="#d4d4d4" fill-opacity="0.25"/><rect x="25" y="14" width="1" height="1.6" fill="#4ec9b0" fill-opacity="0.5"/><rect x="26" y="14" width="3" height="1.6" fill="#4ec9b0" fill-opacity="0.4"/><rect x="29" y="14" width="1" height="1.6" fill="#4ec9b0" fill-opacity="0.5"/><rect x="30" y="14" width="9" height="1.6" fill="#4ec9b0" fill-opacity="0.4"/><rect x="39" y="14" width="1" height="1.6" fill="#d4d4d4" fill-opacity="0.25"/><rect x="0" y="18" width="1" height="1.6" fill="#4ec9b0" fill-opacity="0.5"/><rect x="1" y="18" width="4" height="1.6" fill="#4ec9b0" fill-opacity="0.4"/><rect x="5" y="18" width="2" height="1.6" fill="#d4d4d4" fill-opacity="0.25"/><rect x="7" y="18" width="3" height="1.6" fill="#dcdcaa" fill-opacity="0.4"/><rect x="10" y="18" width="1" height="1.6" fill="#ffd700" fill-opacity="0.25"/><rect x="11" y="18" width="3" height="1.6" fill="#ce9178" fill-opacity="0.25"/><rect x="14" y="18" width="1" height="1.6" fill="#d4d4d4" fill-opacity="0.25"/><rect x="16" y="18" width="8" height="1.6" fill="#569cd6" fill-opacity="0.4"/><rect x="25" y="18" width="2" height="1.6" fill="#da70d6" fill-opacity="0.25"/><rect x="28" y="18" width="1" height="1.6" fill="#da70d6" fill-opacity="0.25"/><rect x="4" y="20" width="6" height="1.6" fill="#c586c0" fill-opacity="0.4"/><rect x="11" y="20" width="8" height="1.6" fill="#dcdcaa" fill-opacity="0.4"/><rect x="19" y="20" width="2" height="1.6" fill="#179fff" fill-opacity="0.25"/><rect x="21" y="20" width="2" height="1.6" fill="#d4d4d4" fill-opacity="0.25"/><rect x="23" y="20" width="5" height="1.6" fill="#dcdcaa" fill-opacity="0.4"/><rect x="28" y="20" width="1" height="1.6" fill="#179fff" fill-opacity="0.25"/><rect x="29" y="20" width="1" height="1.6" fill="#ce9178" fill-opacity="0.25"/><rect x="30" y="20" width="9" height="1.6" fill="#ce9178" fill-opacity="0.4"/><rect x="39" y="20" width="1" height="1.6" fill="#ce9178" fill-opacity="0.25"/><rect x="40" y="20" width="1" height="1.6" fill="#179fff" fill-opacity="0.25"/><rect x="41" y="20" width="1" height="1.6" fill="#d4d4d4" fill-opacity="0.25"/><rect x="0" y="22" width="1" height="1.6" fill="#da70d6" fill-opacity="0.25"/><rect x="1" y="22" width="1" height="1.6" fill="#ffd700" fill-opacity="0.25"/><rect x="2" y="22" width="1" height="1.6" fill="#d4d4d4" fill-opacity="0.25"/><rect x="0" y="26" width="1" height="1.6" fill="#4ec9b0" fill-opacity="0.5"/><rect x="1" y="26" width="4" height="1.6" fill="#4ec9b0" fill-opacity="0.4"/><rect x="5" y="26" width="2" height="1.6" fill="#d4d4d4" fill-opacity="0.25"/><rect x="7" y="26" width="10" height="1.6" fill="#dcdcaa" fill-opacity="0.4"/><rect x="17" y="26" width="1" height="1.6" fill="#ffd700" fill-opacity="0.25"/><rect x="18" y="26" width="1" height="1.6" fill="#ce9178" fill-opacity="0.25"/><rect x="19" y="26" width="4" height="1.6" fill="#ce9178" fill-opacity="0.4"/><rect x="23" y="26" width="1" height="1.6" fill="#ce9178" fill-opacity="0.25"/><rect x="24" y="26" width="1" height="1.6" fill="#ffd700" fill-opacity="0.25"/><rect x="25" y="26" width="2" height="1.6" fill="#d4d4d4" fill-opacity="0.25"/><rect x="27" y="26" width="5" height="1.6" fill="#dcdcaa" fill-opacity="0.4"/><rect x="32" y="26" width="1" height="1.6" fill="#ffd700" fill-opacity="0.25"/><rect x="33" y="26" width="8" height="1.6" fill="#569cd6" fill-opacity="0.4"/><rect x="42" y="26" width="2" height="1.6" fill="#da70d6" fill-opacity="0.25"/><rect x="45" y="26" width="1" height="1.6" fill="#da70d6" fill-opacity="0.25"/><rect x="4" y="28" width="1" height="1.6" fill="#4ec9b0" fill-opacity="0.5"/><rect x="5" y="28" width="4" height="1.6" fill="#4ec9b0" fill-opacity="0.4"/><rect x="9" y="28" width="2" height="1.6" fill="#d4d4d4" fill-opacity="0.25"/><rect x="11" y="28" width="3" height="1.6" fill="#dcdcaa" fill-opacity="0.4"/><rect x="14" y="28" width="1" height="1.6" fill="#179fff" fill-opacity="0.25"/><rect x="15" y="28" width="2" height="1.6" fill="#ce9178" fill-opacity="0.25"/><rect x="17" y="28" width="9" height="1.6" fill="#ce9178" fill-opacity="0.4"/><rect x="26" y="28" width="1" height="1.6" fill="#ce9178" fill-opacity="0.25"/><rect x="27" y="28" width="1" height="1.6" fill="#d4d4d4" fill-opacity="0.25"/><rect x="29" y="28" width="1" height="1.6" fill="#ffd700" fill-opacity="0.25"/><rect x="30" y="28" width="1" height="1.6" fill="#4ec9b0" fill-opacity="0.5"/><rect x="31" y="28" width="8" height="1.6" fill="#4ec9b0" fill-opacity="0.4"/><rect x="39" y="28" width="1" height="1.6" fill="#4ec9b0" fill-opacity="0.5"/><rect x="40" y="28" width="9" height="1.6" fill="#4ec9b0" fill-opacity="0.4"/><rect x="49" y="28" width="2" height="1.6" fill="#d4d4d4" fill-opacity="0.25"/><rect x="51" y="28" width="5" height="1.6" fill="#569cd6" fill-opacity="0.4"/><rect x="56" y="28" width="1" height="1.6" fill="#d4d4d4" fill-opacity="0.25"/><rect x="58" y="28" width="1" height="1.6" fill="#ce9178" fill-opacity="0.25"/><rect x="59" y="28" width="5" height="1.6" fill="#ce9178" fill-opacity="0.4"/><rect x="64" y="28" width="1" height="1.6" fill="#ce9178" fill-opacity="0.25"/><rect x="65" y="28" width="1" height="1.6" fill="#ffd700" fill-opacity="0.25"/><rect x="66" y="28" width="1" height="1.6" fill="#179fff" fill-opacity="0.25"/><rect x="67" y="28" width="2" height="1.6" fill="#d4d4d4" fill-opacity="0.25"/><rect x="69" y="28" width="4" height="1.6" fill="#dcdcaa" fill-opacity="0.4"/><rect x="73" y="28" width="1" height="1.6" fill="#179fff" fill-opacity="0.25"/><rect x="74" y="28" width="1" height="1.6" fill="#ce9178" fill-opacity="0.25"/><rect x="75" y="28" width="9" height="1.6" fill="#ce9178" fill-opacity="0.4"/><rect x="84" y="28" width="1" height="1.6" fill="#ce9178" fill-opacity="0.25"/><rect x="85" y="28" width="1" height="1.6" fill="#179fff" fill-opacity="0.25"/><rect x="86" y="28" width="1" height="1.6" fill="#d4d4d4" fill-opacity="0.25"/><rect x="4" y="30" width="1" height="1.6" fill="#4ec9b0" fill-opacity="0.5"/><rect x="5" y="30" width="4" height="1.6" fill="#4ec9b0" fill-opacity="0.4"/><rect x="9" y="30" width="2" height="1.6" fill="#d4d4d4" fill-opacity="0.25"/><rect x="11" y="30" width="8" height="1.6" fill="#dcdcaa" fill-opacity="0.4"/><rect x="19" y="30" width="1" height="1.6" fill="#179fff" fill-opacity="0.25"/><rect x="20" y="30" width="1" height="1.6" fill="#ce9178" fill-opacity="0.25"/><rect x="21" y="30" width="5" height="1.6" fill="#ce9178" fill-opacity="0.4"/><rect x="26" y="30" width="1" height="1.6" fill="#ce9178" fill-opacity="0.25"/><rect x="27" y="30" width="1" height="1.6" fill="#d4d4d4" fill-opacity="0.25"/><rect x="29" y="30" width="1" height="1.6" fill="#4ec9b0" fill-opacity="0.5"/><rect x="30" y="30" width="3" height="1.6" fill="#4ec9b0" fill-opacity="0.4"/><rect x="33" y="30" width="1" height="1.6" fill="#4ec9b0" fill-opacity="0.5"/><rect x="34" y="30" width="9" height="1.6" fill="#4ec9b0" fill-opacity="0.4"/><rect x="43" y="30" width="2" height="1.6" fill="#d4d4d4" fill-opacity="0.25"/><rect x="45" y="30" width="5" height="1.6" fill="#569cd6" fill-opacity="0.4"/><rect x="50" y="30" width="1" height="1.6" fill="#179fff" fill-opacity="0.25"/><rect x="51" y="30" width="1" height="1.6" fill="#d4d4d4" fill-opacity="0.25"/><rect x="4" y="32" width="2" height="1.6" fill="#6a9955" fill-opacity="0.25"/><rect x="7" y="32" width="3" height="1.6" fill="#6a9955" fill-opacity="0.25"/><rect x="11" y="32" width="5" height="1.6" fill="#6a9955" fill-opacity="0.4"/><rect x="17" y="32" width="9" height="1.6" fill="#6a9955" fill-opacity="0.4"/><rect x="27" y="32" width="3" height="1.6" fill="#6a9955" fill-opacity="0.4"/><rect x="31" y="32" width="5" height="1.6" fill="#6a9955" fill-opacity="0.4"/><rect x="4" y="34" width="1" height="1.6" fill="#4ec9b0" fill-opacity="0.5"/><rect x="5" y="34" width="4" height="1.6" fill="#4ec9b0" fill-opacity="0.4"/><rect x="9" y="34" width="2" height="1.6" fill="#d4d4d4" fill-opacity="0.25"/><rect x="11" y="34" width="8" height="1.6" fill="#dcdcaa" fill-opacity="0.4"/><rect x="19" y="34" width="1" height="1.6" fill="#179fff" fill-opacity="0.25"/><rect x="20" y="34" width="1" height="1.6" fill="#ce9178" fill-opacity="0.25"/><rect x="21" y="34" width="8" height="1.6" fill="#ce9178" fill-opacity="0.4"/><rect x="29" y="34" width="1" height="1.6" fill="#ce9178" fill-opacity="0.25"/><rect x="30" y="34" width="1" height="1.6" fill="#d4d4d4" fill-opacity="0.25"/><rect x="32" y="34" width="1" height="1.6" fill="#4ec9b0" fill-opacity="0.5"/><rect x="33" y="34" width="7" height="1.6" fill="#4ec9b0" fill-opacity="0.4"/><rect x="40" y="34" width="1" height="1.6" fill="#4ec9b0" fill-opacity="0.5"/><rect x="41" y="34" width="9" height="1.6" fill="#4ec9b0" fill-opacity="0.4"/><rect x="50" y="34" width="2" height="1.6" fill="#d4d4d4" fill-opacity="0.25"/><rect x="52" y="34" width="5" height="1.6" fill="#569cd6" fill-opacity="0.4"/><rect x="57" y="34" width="1" height="1.6" fill="#179fff" fill-opacity="0.25"/><rect x="58" y="34" width="1" height="1.6" fill="#d4d4d4" fill-opacity="0.25"/><rect x="4" y="36" width="2" height="1.6" fill="#6a9955" fill-opacity="0.25"/><rect x="7" y="36" width="3" height="1.6" fill="#6a9955" fill-opacity="0.25"/><rect x="11" y="36" width="5" height="1.6" fill="#6a9955" fill-opacity="0.4"/><rect x="17" y="36" width="9" height="1.6" fill="#6a9955" fill-opacity="0.4"/><rect x="26" y="36" width="1" height="1.6" fill="#6a9955" fill-opacity="0.25"/><rect x="28" y="36" width="5" height="1.6" fill="#6a9955" fill-opacity="0.4"/><rect x="33" y="36" width="1" height="1.6" fill="#6a9955" fill-opacity="0.25"/><rect x="35" y="36" width="8" height="1.6" fill="#6a9955" fill-opacity="0.4"/><rect x="4" y="38" width="1" height="1.6" fill="#4ec9b0" fill-opacity="0.5"/><rect x="5" y="38" width="4" height="1.6" fill="#4ec9b0" fill-opacity="0.4"/><rect x="9" y="38" width="2" height="1.6" fill="#d4d4d4" fill-opacity="0.25"/><rect x="11" y="38" width="8" height="1.6" fill="#dcdcaa" fill-opacity="0.4"/><rect x="19" y="38" width="1" height="1.6" fill="#179fff" fill-opacity="0.25"/><rect x="20" y="38" width="1" height="1.6" fill="#ce9178" fill-opacity="0.25"/><rect x="21" y="38" width="4" height="1.6" fill="#ce9178" fill-opacity="0.4"/><rect x="25" y="38" width="1" height="1.6" fill="#ce9178" fill-opacity="0.25"/><rect x="26" y="38" width="1" height="1.6" fill="#d4d4d4" fill-opacity="0.25"/><rect x="28" y="38" width="1" height="1.6" fill="#4ec9b0" fill-opacity="0.5"/><rect x="29" y="38" width="3" height="1.6" fill="#4ec9b0" fill-opacity="0.4"/><rect x="32" y="38" width="1" height="1.6" fill="#4ec9b0" fill-opacity="0.5"/><rect x="33" y="38" width="9" height="1.6" fill="#4ec9b0" fill-opacity="0.4"/><rect x="42" y="38" width="2" height="1.6" fill="#d4d4d4" fill-opacity="0.25"/><rect x="44" y="38" width="5" height="1.6" fill="#569cd6" fill-opacity="0.4"/><rect x="49" y="38" width="1" height="1.6" fill="#179fff" fill-opacity="0.25"/><rect x="50" y="38" width="1" height="1.6" fill="#d4d4d4" fill-opacity="0.25"/><rect x="4" y="40" width="2" height="1.6" fill="#6a9955" fill-opacity="0.25"/><rect x="7" y="40" width="3" height="1.6" fill="#6a9955" fill-opacity="0.25"/><rect x="11" y="40" width="5" height="1.6" fill="#6a9955" fill-opacity="0.4"/><rect x="17" y="40" width="9" height="1.6" fill="#6a9955" fill-opacity="0.4"/><rect x="26" y="40" width="1" height="1.6" fill="#6a9955" fill-opacity="0.25"/><rect x="28" y="40" width="5" height="1.6" fill="#6a9955" fill-opacity="0.4"/><rect x="33" y="40" width="1" height="1.6" fill="#6a9955" fill-opacity="0.25"/><rect x="35" y="40" width="8" height="1.6" fill="#6a9955" fill-opacity="0.4"/><rect x="43" y="40" width="1" height="1.6" fill="#6a9955" fill-opacity="0.25"/><rect x="45" y="40" width="4" height="1.6" fill="#6a9955" fill-opacity="0.4"/><rect x="4" y="42" width="1" height="1.6" fill="#4ec9b0" fill-opacity="0.5"/><rect x="5" y="42" width="4" height="1.6" fill="#4ec9b0" fill-opacity="0.4"/><rect x="9" y="42" width="2" height="1.6" fill="#d4d4d4" fill-opacity="0.25"/><rect x="11" y="42" width="8" height="1.6" fill="#dcdcaa" fill-opacity="0.4"/><rect x="19" y="42" width="1" height="1.6" fill="#179fff" fill-opacity="0.25"/><rect x="20" y="42" width="1" height="1.6" fill="#ce9178" fill-opacity="0.25"/><rect x="21" y="42" width="4" height="1.6" fill="#ce9178" fill-opacity="0.4"/><rect x="25" y="42" width="1" height="1.6" fill="#ce9178" fill-opacity="0.25"/><rect x="26" y="42" width="1" height="1.6" fill="#d4d4d4" fill-opacity="0.25"/><rect x="28" y="42" width="1" height="1.6" fill="#4ec9b0" fill-opacity="0.5"/><rect x="29" y="42" width="3" height="1.6" fill="#4ec9b0" fill-opacity="0.4"/><rect x="32" y="42" width="1" height="1.6" fill="#4ec9b0" fill-opacity="0.5"/><rect x="33" y="42" width="9" height="1.6" fill="#4ec9b0" fill-opacity="0.4"/><rect x="42" y="42" width="2" height="1.6" fill="#d4d4d4" fill-opacity="0.25"/><rect x="44" y="42" width="5" height="1.6" fill="#569cd6" fill-opacity="0.4"/><rect x="49" y="42" width="1" height="1.6" fill="#179fff" fill-opacity="0.25"/><rect x="50" y="42" width="1" height="1.6" fill="#d4d4d4" fill-opacity="0.25"/><rect x="4" y="44" width="1" height="1.6" fill="#4ec9b0" fill-opacity="0.5"/><rect x="5" y="44" width="4" height="1.6" fill="#4ec9b0" fill-opacity="0.4"/><rect x="9" y="44" width="2" height="1.6" fill="#d4d4d4" fill-opacity="0.25"/><rect x="11" y="44" width="8" height="1.6" fill="#dcdcaa" fill-opacity="0.4"/><rect x="19" y="44" width="1" height="1.6" fill="#179fff" fill-opacity="0.25"/><rect x="20" y="44" width="1" height="1.6" fill="#ce9178" fill-opacity="0.25"/><rect x="21" y="44" width="4" height="1.6" fill="#ce9178" fill-opacity="0.4"/><rect x="25" y="44" width="1" height="1.6" fill="#ce9178" fill-opacity="0.25"/><rect x="26" y="44" width="1" height="1.6" fill="#d4d4d4" fill-opacity="0.25"/><rect x="28" y="44" width="1" height="1.6" fill="#4ec9b0" fill-opacity="0.5"/><rect x="29" y="44" width="3" height="1.6" fill="#4ec9b0" fill-opacity="0.4"/><rect x="32" y="44" width="1" height="1.6" fill="#4ec9b0" fill-opacity="0.5"/><rect x="33" y="44" width="9" height="1.6" fill="#4ec9b0" fill-opacity="0.4"/><rect x="42" y="44" width="2" height="1.6" fill="#d4d4d4" fill-opacity="0.25"/><rect x="44" y="44" width="5" height="1.6" fill="#569cd6" fill-opacity="0.4"/><rect x="49" y="44" width="1" height="1.6" fill="#179fff" fill-opacity="0.25"/><rect x="50" y="44" width="1" height="1.6" fill="#d4d4d4" fill-opacity="0.25"/><rect x="4" y="46" width="1" height="1.6" fill="#4ec9b0" fill-opacity="0.5"/><rect x="5" y="46" width="4" height="1.6" fill="#4ec9b0" fill-opacity="0.4"/><rect x="9" y="46" width="2" height="1.6" fill="#d4d4d4" fill-opacity="0.25"/><rect x="11" y="46" width="3" height="1.6" fill="#dcdcaa" fill-opacity="0.4"/><rect x="14" y="46" width="1" height="1.6" fill="#179fff" fill-opacity="0.25"/><rect x="15" y="46" width="1" height="1.6" fill="#ce9178" fill-opacity="0.25"/><rect x="16" y="46" width="4" height="1.6" fill="#ce9178" fill-opacity="0.4"/><rect x="20" y="46" width="2" height="1.6" fill="#ce9178" fill-opacity="0.25"/><rect x="22" y="46" width="4" height="1.6" fill="#ce9178" fill-opacity="0.4"/><rect x="26" y="46" width="2" height="1.6" fill="#ce9178" fill-opacity="0.25"/><rect x="28" y="46" width="6" height="1.6" fill="#ce9178" fill-opacity="0.4"/><rect x="34" y="46" width="1" height="1.6" fill="#ce9178" fill-opacity="0.25"/><rect x="35" y="46" width="1" height="1.6" fill="#d4d4d4" fill-opacity="0.25"/><rect x="37" y="46" width="1" height="1.6" fill="#ffd700" fill-opacity="0.25"/><rect x="38" y="46" width="1" height="1.6" fill="#4ec9b0" fill-opacity="0.5"/><rect x="39" y="46" width="3" height="1.6" fill="#4ec9b0" fill-opacity="0.4"/><rect x="42" y="46" width="1" height="1.6" fill="#4ec9b0" fill-opacity="0.5"/><rect x="43" y="46" width="9" height="1.6" fill="#4ec9b0" fill-opacity="0.4"/><rect x="52" y="46" width="2" height="1.6" fill="#d4d4d4" fill-opacity="0.25"/><rect x="54" y="46" width="5" height="1.6" fill="#569cd6" fill-opacity="0.4"/><rect x="59" y="46" width="1" height="1.6" fill="#d4d4d4" fill-opacity="0.25"/><rect x="61" y="46" width="1" height="1.6" fill="#ce9178" fill-opacity="0.25"/><rect x="62" y="46" width="6" height="1.6" fill="#ce9178" fill-opacity="0.4"/><rect x="68" y="46" width="1" height="1.6" fill="#ce9178" fill-opacity="0.5"/><rect x="69" y="46" width="3" height="1.6" fill="#ce9178" fill-opacity="0.4"/><rect x="72" y="46" width="1" height="1.6" fill="#ce9178" fill-opacity="0.25"/><rect x="73" y="46" width="1" height="1.6" fill="#ffd700" fill-opacity="0.25"/><rect x="74" y="46" width="1" height="1.6" fill="#179fff" fill-opacity="0.25"/><rect x="75" y="46" width="2" height="1.6" fill="#d4d4d4" fill-opacity="0.25"/><rect x="77" y="46" width="4" height="1.6" fill="#dcdcaa" fill-opacity="0.4"/><rect x="81" y="46" width="1" height="1.6" fill="#179fff" fill-opacity="0.25"/><rect x="82" y="46" width="1" height="1.6" fill="#ce9178" fill-opacity="0.25"/><rect x="83" y="46" width="4" height="1.6" fill="#ce9178" fill-opacity="0.4"/><rect x="87" y="46" width="1" height="1.6" fill="#ce9178" fill-opacity="0.25"/><rect x="88" y="46" width="6" height="1.6" fill="#ce9178" fill-opacity="0.4"/><rect x="94" y="46" width="1" height="1.6" fill="#ce9178" fill-opacity="0.25"/><rect x="95" y="46" width="1" height="1.6" fill="#179fff" fill-opacity="0.25"/><rect x="96" y="46" width="1" height="1.6" fill="#d4d4d4" fill-opacity="0.25"/><rect x="0" y="48" width="1" height="1.6" fill="#da70d6" fill-opacity="0.25"/><rect x="1" y="48" width="1" height="1.6" fill="#ffd700" fill-opacity="0.25"/><rect x="2" y="48" width="1" height="1.6" fill="#d4d4d4" fill-opacity="0.25"/><rect x="0" y="52" width="7" height="1.6" fill="#c586c0" fill-opacity="0.4"/><rect x="8" y="52" width="2" height="1.6" fill="#569cd6" fill-opacity="0.4"/><rect x="10" y="52" width="3" height="1.6" fill="#569cd6" fill-opacity="0.5"/><rect x="13" y="52" width="2" height="1.6" fill="#569cd6" fill-opacity="0.4"/><rect x="16" y="52" width="1" height="1.6" fill="#d4d4d4" fill-opacity="0.25"/><rect x="18" y="52" width="2" height="1.6" fill="#ce9178" fill-opacity="0.25"/><rect x="20" y="52" width="4" height="1.6" fill="#ce9178" fill-opacity="0.4"/><rect x="24" y="52" width="1" height="1.6" fill="#ce9178" fill-opacity="0.25"/><rect x="25" y="52" width="3" height="1.6" fill="#ce9178" fill-opacity="0.4"/><rect x="28" y="52" width="1" height="1.6" fill="#ce9178" fill-opacity="0.25"/><rect x="29" y="52" width="1" height="1.6" fill="#d4d4d4" fill-opacity="0.25"/></svg>
<div class="a" style="left:1352px;top:92px;width:14px;height:652px;background:#1f1f1f;border-left:1px solid #262626"></div>
<div class="a" style="left:1352px;top:92px;width:14px;height:341px;background:#434343"></div>
<div class="a" style="left:1352px;top:92px;width:14px;height:2px;background:#555555"></div>
<div class="a" style="left:381px;top:732px;width:842px;height:12px;background:#434343"></div>
<div class="a" style="left:0;top:744px;width:1366px;height:1px;background:#2b2b2b"></div>
<div class="a" style="left:0;top:745px;width:1366px;height:21px;background:#181818"></div>
<div class="a" style="left:0;top:766px;width:1366px;height:2px;background:#000000"></div>
<div class="a" style="left:0;top:745px;width:34px;height:21px;background:#0078d4"></div>
<svg class="i" style="left:12px;top:748px" width="11" height="12" viewBox="0 0 11 12"><path d="M1 4l5 4-5 4 M10 1 5.5 4.5 10 8" fill="none" stroke="#fff" stroke-width="1.3"/></svg>
<svg class="i" style="left:43px;top:749px" width="13" height="13" viewBox="0 0 13 13"><circle cx="6.5" cy="6.5" r="5.8" fill="none" stroke="#cccccc" stroke-width="1.2"/><path d="M4.2 4.2l4.6 4.6M8.8 4.2l-4.6 4.6" stroke="#cccccc" stroke-width="1.2"/></svg>
<div class="st" style="left:59px">0</div>
<svg class="i" style="left:70px;top:749px" width="13" height="12" viewBox="0 0 13 12"><path d="M6.5.8 12.4 11.3H.6z" fill="none" stroke="#cccccc" stroke-width="1.2" stroke-linejoin="round"/><path d="M6.5 4.5v3.5M6.5 9v1.3" stroke="#cccccc" stroke-width="1.2"/></svg>
<div class="st" style="left:86px">0</div>
<svg class="i" style="left:112px;top:749px" width="9" height="12" viewBox="0 0 9 12"><path d="M5.5.5 1 6.5h3.5L3 11.5 8.5 5H5z" fill="none" stroke="#cccccc" stroke-width="1.2" stroke-linejoin="round"/></svg>
<div class="st" style="left:894.00px;transform:scaleX(0.9225)">Ln 1, Col 1</div>
<div class="st" style="left:965.00px;transform:scaleX(0.8889)">Spaces: 4</div>
<div class="st" style="left:1029.80px;transform:scaleX(0.9356)">UTF-8</div>
<div class="st" style="left:1077.60px;transform:scaleX(0.7734)">LF</div>
<div class="st" style="left:1125.40px;transform:scaleX(0.8352)">PHP</div>
<div class="st" style="left:1210.00px;transform:scaleX(0.9384)">Go Live</div>
<div class="st" style="left:1283.00px;transform:scaleX(0.9744)">Prettier</div>
<svg class="i" style="left:1106px;top:750px" width="12" height="11" viewBox="0 0 12 11"><path d="M3.5.5c-1.5 0-2 .5-2 1.8v1.7c0 .8-.4 1.2-1 1.5.6.3 1 .7 1 1.5v1.7c0 1.3.5 1.8 2 1.8M8.5.5c1.5 0 2 .5 2 1.8v1.7c0 .8.4 1.2 1 1.5-.6.3-1 .7-1 1.5v1.7c0 1.3-.5 1.8-2 1.8" fill="none" stroke="#cccccc" stroke-width="1.1"/></svg>
<svg class="i" style="left:1162px;top:749px" width="15" height="12" viewBox="0 0 15 12">
<path d="M7.5 2.2C6.5.6 4.8.3 3.3.6 1.7 1 1.3 2.5 1.5 4.2 1 4.6.5 5.5.5 6.8c0 2.7 3 4.7 7 4.7s7-2 7-4.7c0-1.3-.5-2.2-1-2.6.2-1.7-.2-3.2-1.8-3.6-1.5-.3-3.2 0-4.2 1.6z" fill="#cccccc"/>
<ellipse cx="4.4" cy="3.2" rx="1.5" ry="1.4" fill="#181818"/><ellipse cx="10.6" cy="3.2" rx="1.5" ry="1.4" fill="#181818"/>
<rect x="3.2" y="6.2" width="8.6" height="3.6" rx="1" fill="#181818"/>
<path d="M6 7v2M9 7v2" stroke="#cccccc" stroke-width="1.1"/></svg>
<svg class="i" style="left:1194px;top:749px" width="12" height="13" viewBox="0 0 12 13">
<path d="M2.5 9.2a5 5 0 1 1 7 0" fill="none" stroke="#cccccc" stroke-width="1.1"/>
<path d="M4.2 7.6a2.7 2.7 0 1 1 3.6 0" fill="none" stroke="#cccccc" stroke-width="1.1"/>
<circle cx="6" cy="5.6" r="1.1" fill="#cccccc"/><path d="M6 6.5v6" stroke="#cccccc" stroke-width="1.6"/></svg>
<svg class="i" style="left:1266px;top:749px" width="13" height="13" viewBox="0 0 13 13"><circle cx="6.5" cy="6.5" r="5.8" fill="none" stroke="#cccccc" stroke-width="1.2"/><path d="M2.5 10.5l8-8" stroke="#cccccc" stroke-width="1.2"/></svg>
<svg class="i" style="left:1339px;top:749px" width="11" height="12" viewBox="0 0 11 12"><path d="M1 9.5h9l-1.3-1.8V4.8A3.2 3.2 0 0 0 5.5 1.5 3.2 3.2 0 0 0 2.3 4.8v2.9z M4 10.3a1.5 1.5 0 0 0 3 0" fill="none" stroke="#cccccc" stroke-width="1.1" stroke-linejoin="round"/></svg>
</body></html>
